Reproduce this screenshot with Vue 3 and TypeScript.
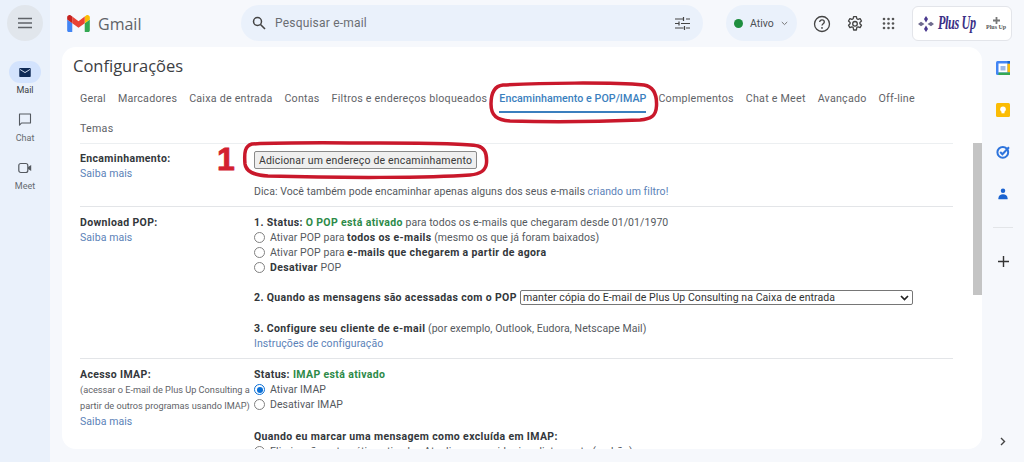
<script setup lang="ts">
const tabs: string[] = ['Geral', 'Marcadores', 'Caixa de entrada', 'Contas', 'Filtros e endereços bloqueados', 'Encaminhamento e POP/IMAP', 'Complementos', 'Chat e Meet', 'Avançado', 'Off-line', 'Temas']
</script>

<template>
  <div class="app">
    <aside class="rail">
      <button class="burger" aria-label="Menu">
        <svg width="16" height="12" viewBox="0 0 16 12"><path d="M1 1.500h14M1 6h14M1 10.500h14" stroke="#5f6368" stroke-width="1.400" fill="none" /></svg>
      </button>
      <div class="nav-item">
        <span class="pill active">
          <svg width="12" height="9" viewBox="0 0 14 11"><path d="M1.200 0h11.600C13.500 0 14 .5 14 1.200v8.600c0 .7-.5 1.200-1.200 1.200H1.200C.5 11 0 10.500 0 9.800V1.200C0 .5.500 0 1.200 0z" fill="#0f2a55" /><path d="M1 1.800l6 3.800 6-3.800" stroke="#e3ecf9" stroke-width="1.100" fill="none" /></svg>
        </span>
        <span class="nav-label dark">Mail</span>
      </div>
      <div class="nav-item">
        <span class="pill">
          <svg width="14" height="14" viewBox="0 0 14 14"><path d="M1.500 1h11v9h-9l-2 2.200z" stroke="#555a60" stroke-width="1.100" fill="none" stroke-linejoin="round" /></svg>
        </span>
        <span class="nav-label">Chat</span>
      </div>
      <div class="nav-item">
        <span class="pill">
          <svg width="14" height="12" viewBox="0 0 14 12"><rect x=".8" y="1.500" width="9" height="9" rx="2" stroke="#555a60" stroke-width="1.200" fill="none" /><path d="M10 5l3.200-2v6L10 7z" fill="#555a60" /></svg>
        </span>
        <span class="nav-label">Meet</span>
      </div>
    </aside>

    <div class="main">
      <header class="topbar">
        <div class="brand">
          <svg width="23" height="17" viewBox="0 0 24 18">
            <path d="M1.600 18h3.800V8.700L0 4.700v11.700C0 17.300.7 18 1.600 18z" fill="#4285f4" />
            <path d="M18.600 18h3.800c.9 0 1.600-.7 1.600-1.600V4.700l-5.400 4z" fill="#34a853" />
            <path d="M18.600 1.700v7L24 4.700V2.500C24 .500 21.700-.6 20.100.6z" fill="#fbbc04" />
            <path d="M5.400 8.700v-7L12 6.700l6.600-5v7L12 13.600z" fill="#ea4335" />
            <path d="M0 2.500v2.200l5.400 4v-7L3.900.6C2.300-.6 0 .5 0 2.500z" fill="#c5221f" />
          </svg>
          <span class="wordmark">Gmail</span>
        </div>
        <div class="search">
          <svg width="14" height="14" viewBox="0 0 14 14"><circle cx="5.500" cy="5.500" r="4" stroke="#444" stroke-width="1.500" fill="none" /><path d="M8.500 8.500l4.500 4.500" stroke="#444" stroke-width="1.600" /></svg>
          <span class="placeholder">Pesquisar e-mail</span>
          <svg class="tune" width="15" height="13" viewBox="0 0 15 13"><path d="M0 2h8.500M11 2h4M8.500 0v4M0 6.500h3.500M6 6.500h9M4 4.500v4M0 11h8.500M11 11h4M9.500 9v4" stroke="#444" stroke-width="1.200" fill="none" /></svg>
        </div>
        <div class="status"><i class="dot"></i><span>Ativo</span>
          <svg width="7" height="5" viewBox="0 0 7 5"><path d="M.8 1l2.700 2.600L6.200 1" stroke="#777" stroke-width="1" fill="none" /></svg>
        </div>
        <svg class="ico help" width="18" height="18" viewBox="0 0 18 18"><circle cx="9" cy="9" r="7.500" stroke="#444" stroke-width="1.300" fill="none" /><path d="M6.700 7.100c0-1.300 1-2.200 2.300-2.200s2.300.9 2.300 2.100c0 1.700-2.300 1.800-2.300 3.600" stroke="#444" stroke-width="1.300" fill="none" /><circle cx="9" cy="12.900" r=".9" fill="#444" /></svg>
        <svg class="ico gear" width="18" height="18" viewBox="0 0 18 18"><path d="M7.600 1h2.800l.4 2.100 1.300.7 2-.8 1.400 2.400-1.600 1.400v1.400l1.600 1.400-1.400 2.400-2-.8-1.300.7-.4 2.500H7.600l-.4-2.500-1.300-.7-2 .8-1.400-2.400 1.600-1.400V6.800L2.500 5.400 3.900 3l2 .8 1.300-.7z" transform="translate(0 .6)" stroke="#444" stroke-width="1.300" fill="none" stroke-linejoin="round" /><circle cx="9" cy="8.800" r="2.300" stroke="#444" stroke-width="1.300" fill="none" /></svg>
        <svg class="ico apps" width="13" height="13" viewBox="0 0 13 13"><g fill="#555"><circle cx="2" cy="2" r="1.300" /><circle cx="6.500" cy="2" r="1.300" /><circle cx="11" cy="2" r="1.300" /><circle cx="2" cy="6.500" r="1.300" /><circle cx="6.500" cy="6.500" r="1.300" /><circle cx="11" cy="6.500" r="1.300" /><circle cx="2" cy="11" r="1.300" /><circle cx="6.500" cy="11" r="1.300" /><circle cx="11" cy="11" r="1.300" /></g></svg>
        <div class="account">
          <svg class="flower" width="16" height="16" viewBox="0 0 16 16"><g fill="#4b3a8f"><path d="M8 0l2 3-2 3.500L6 3z" /><path d="M8 16l2-3-2-3.500L6 13z" /></g><path d="M0 8l3-2.200L6.500 8 3 10.200zM16 8l-3-2.200L9.500 8l3.500 2.200z" fill="#6f6b8e" /></svg>
          <span class="plus">Plus Up</span>
          <span class="mini"><svg width="7" height="7" viewBox="0 0 7 7"><path d="M3.500 0v7M0 3.500h7" stroke="#777" stroke-width="1.800" /></svg><b>Plus Up</b></span>
        </div>
      </header>

      <div class="body">
        <section class="card">
          <h1>Configurações</h1>
          <nav class="tabs">
            <a v-for="t in tabs" :key="t" class="tab" :class="{ on: t === 'Encaminhamento e POP/IMAP' }">{{ t }}</a>
          </nav>
          <div class="scroller">
            <div class="rows">
              <div class="row first">
                <div class="lab"><b>Encaminhamento:</b><a>Saiba mais</a></div>
                <div class="val">
                  <button class="add">Adicionar um endereço de encaminhamento</button>
                  <p class="tip">Dica: Você também pode encaminhar apenas alguns dos seus e-mails <a>criando um filtro!</a></p>
                </div>
              </div>
              <div class="row">
                <div class="lab"><b>Download POP:</b><a>Saiba mais</a></div>
                <div class="val">
                  <p><b>1. Status: <em>O POP está ativado</em></b> para todos os e-mails que chegaram desde 01/01/1970</p>
                  <label class="opt"><i class="radio"></i><span>Ativar POP para <b>todos os e-mails</b> (mesmo os que já foram baixados)</span></label>
                  <label class="opt"><i class="radio"></i><span>Ativar POP para <b>e-mails que chegarem a partir de agora</b></span></label>
                  <label class="opt"><i class="radio"></i><span><b>Desativar</b> POP</span></label>
                  <div class="when">
                    <b>2. Quando as mensagens são acessadas com o POP</b>
                    <div class="select"><span>manter cópia do E-mail de Plus Up Consulting na Caixa de entrada</span>
                      <svg width="9" height="6" viewBox="0 0 9 6"><path d="M1 1l3.500 3.500L8 1" stroke="#222" stroke-width="1.700" fill="none" /></svg>
                    </div>
                  </div>
                  <p class="third"><b>3. Configure seu cliente de e-mail</b> (por exemplo, Outlook, Eudora, Netscape Mail)</p>
                  <a>Instruções de configuração</a>
                </div>
              </div>
              <div class="row">
                <div class="lab">
                  <b>Acesso IMAP:</b>
                  <small>(acessar o E-mail de Plus Up Consulting a partir de outros programas usando IMAP)</small>
                  <a>Saiba mais</a>
                </div>
                <div class="val">
                  <p><b>Status: <em>IMAP está ativado</em></b></p>
                  <label class="opt"><i class="radio sel"></i><span>Ativar IMAP</span></label>
                  <label class="opt"><i class="radio"></i><span>Desativar IMAP</span></label>
                  <p class="when2"><b>Quando eu marcar uma mensagem como excluída em IMAP:</b></p>
                  <label class="opt"><i class="radio"></i><span>Eliminação automática ativada - Atualizar o servidor imediatamente (padrão)</span></label>
                </div>
              </div>
            </div>
            <div class="thumb"></div>
          </div>
        </section>

        <aside class="side">
          <svg width="14" height="14" viewBox="0 0 14 14"><rect width="14" height="14" rx="1.500" fill="#4285f4" /><rect x="2.500" y="2.500" width="9" height="9" fill="#fff" /><path d="M11.500 2.500H14V11.500H11.500z" fill="#fbbc04" /><path d="M2.500 11.500H14V14H2.500z" fill="#34a853" /><path d="M11.500 0H14V2.500H11.500z" fill="#1967d2" /><rect x="4.500" y="5" width="5" height="4.500" fill="#9db9e8" /></svg>
          <svg width="14" height="14" viewBox="0 0 14 14"><rect width="14" height="14" rx="1.500" fill="#fbbc04" /><circle cx="7" cy="6.300" r="2.800" fill="#fff" /><rect x="5.500" y="9" width="3" height="1.300" fill="#fff" /></svg>
          <svg width="14" height="14" viewBox="0 0 14 14"><circle cx="6.800" cy="7.300" r="5.400" stroke="#2e74dc" stroke-width="2" fill="none" /><path d="M4.200 7l2.200 2.200 6.600-7" stroke="#2e74dc" stroke-width="2" fill="none" /></svg>
          <svg width="10" height="14" viewBox="0 0 12 14"><circle cx="6" cy="3.200" r="2.700" fill="#1a63d0" /><path d="M.5 12c0-3 2.700-4.800 5.500-4.800s5.500 1.800 5.500 4.800v1.300H.5z" fill="#1a63d0" /></svg>
          <i class="rule"></i>
          <svg width="11" height="11" viewBox="0 0 11 11"><path d="M5.500 0v11M0 5.500h11" stroke="#333" stroke-width="1.400" /></svg>
          <svg class="chev" width="6" height="9" viewBox="0 0 6 9"><path d="M1 1l3.500 3.500L1 8" stroke="#444" stroke-width="1.400" fill="none" /></svg>
        </aside>
      </div>
    </div>

    <svg class="marks" width="1024" height="462" viewBox="0 0 1024 462">
      <path d="M503 85C540 83 610 82 644 85C655 87 657 96 656.500 106C656 116 651 119 640 120C590 122 545 122 510 121C497 120 491 116 491 104C491 93 494 86 503 85z" />
      <path d="M252 144C290 142 340 143 380 143C420 143 465 143 478 146C486 148 487 156 486.500 163C486 170 481 174 470 175C430 178 340 178 268 176C254 175 246 172 245 164C244 152 245 146 252 144z" />
    </svg>
    <span class="one">1</span>
  </div>
</template>

<style>
html, body { margin: 0; background: #f6f8fc; }
</style>

<style scoped>
.app { position: relative; display: flex; width: 1024px; height: 462px; overflow: hidden; background: #f6f8fc; font-family: Roboto, "Liberation Sans", sans-serif; color: #3c4043; }
.rail { width: 50px; flex: none; background: #eaf1fb; display: flex; flex-direction: column; align-items: center; }
.burger { width: 36px; height: 36px; flex: none; margin-top: 5px; margin-bottom: 20px; border: 0; border-radius: 50%; background: #e1e6ec; display: flex; align-items: center; justify-content: center; padding: 0; }
.nav-item { display: flex; flex-direction: column; align-items: center; margin-bottom: 12px; }
.pill { width: 32px; height: 22px; border-radius: 11px; display: flex; align-items: center; justify-content: center; }
.pill.active { background: #d3e3fd; }
.nav-label { font-size: 9px; line-height: 14px; color: #666b70; }
.nav-label.dark { color: #3c4043; }
.main { flex: 1; min-width: 0; display: flex; flex-direction: column; }
.topbar { height: 47px; flex: none; display: flex; align-items: center; }
.brand { width: 191px; padding-left: 17px; box-sizing: border-box; display: flex; align-items: center; gap: 8px; }
.wordmark { font-family: "Open Sans", Roboto, sans-serif; font-size: 16px; color: #5f6368; }
.search { width: 462px; height: 36px; box-sizing: border-box; border-radius: 18px; background: #eaf1fb; display: flex; align-items: center; padding: 0 13px 0 11px; margin-top: -1px; }
.placeholder { margin-left: 9px; font-size: 12px; color: #6a6e73; letter-spacing: .2px; flex: 1; }
.status { width: 71px; height: 36px; box-sizing: border-box; margin-left: 23px; margin-top: -1px; border-radius: 18px; background: #eaf1fb; display: flex; align-items: center; padding-left: 8px; font-size: 10.500px; color: #4c5054; }
.dot { width: 9px; height: 9px; border-radius: 50%; background: #1e8e3e; margin-right: 7px; }
.status svg { margin-left: 7px; }
.ico { flex: none; }
.help { margin-left: 16px; }
.gear { margin-left: 15px; }
.apps { margin-left: 18px; }
.account { width: 100px; height: 35px; box-sizing: border-box; margin-left: 17px; border: 1px solid #e3e5ea; border-radius: 6px; background: #fff; display: flex; align-items: center; padding-left: 5px; flex: none; overflow: hidden; }
.flower { flex: none; }
.plus { margin-left: 4px; width: 42px; flex: none; font-family: "Liberation Serif", serif; font-style: italic; font-weight: 700; font-size: 18px; letter-spacing: -.6px; color: #3b2f86; white-space: nowrap; transform: scaleX(.68); transform-origin: left center; }
.mini { margin-left: 6px; display: flex; flex-direction: column; align-items: center; line-height: 7px; }
.mini b { font-family: "Liberation Serif", serif; font-size: 6px; line-height: 7px; color: #555; white-space: nowrap; }
.body { flex: 1; min-height: 0; display: flex; padding-bottom: 13px; }
.card { width: 920px; margin-left: 12px; flex: none; background: #fff; border-radius: 14px; display: flex; flex-direction: column; overflow: hidden; }
h1 { margin: 9px 0 0 11px; font-size: 16.500px; line-height: 20px; font-weight: 400; color: #3c4043; font-family: "Open Sans", Roboto, sans-serif; letter-spacing: 0; }
.tabs { margin: 7px 0 0 18px; width: 860px; display: flex; flex-wrap: wrap; column-gap: 12px; height: 60px; align-content: flex-start; }
.tab { height: 30px; line-height: 32px; font-size: 10.700px; letter-spacing: .23px; color: #5f6368; box-sizing: border-box; white-space: nowrap; }
.tab.on { color: #3b7fbe; font-weight: 500; letter-spacing: .04px; border-bottom: 2px solid #3b7fbe; }
.scroller { flex: 1; min-height: 0; display: flex; overflow: hidden; }
.rows { width: 873px; margin-left: 18px; flex: none; font-size: 10.500px; line-height: 15px; letter-spacing: .07px; color: #55595e; border-top: 1px solid #eceff1; }
.row { display: flex; padding: 8px 0 7px; border-top: 1px solid #e3e5e8; }
.row:first-child { border-top: 0; padding-top: 7px; }
.lab { width: 174px; flex: none; display: flex; flex-direction: column; }
.lab b, .val b { color: #33373b; font-weight: 700; letter-spacing: .36px; }
.lab small { font-size: 9.200px; line-height: 16px; letter-spacing: 0; color: #5f6368; white-space: normal; }
a { color: #5b82b8; }
em { font-style: normal; color: #2d8a48; }
.val { flex: 1; min-width: 0; }
p { margin: 0; }
.add { display: block; width: 223px; height: 18px; padding: 0; border: 1px solid #8a8a8a; border-radius: 2px; background: #efefef; color: #3a3a3a; font: inherit; letter-spacing: .18px; text-align: center; margin-bottom: 15px; }
.opt { display: flex; align-items: center; white-space: nowrap; }
.radio { width: 9px; height: 9px; border: 1px solid #808080; border-radius: 50%; margin-right: 5px; flex: none; background: #fff; position: relative; }
.radio.sel { border-color: #0a6fd6; }
.radio.sel::after { content: ""; position: absolute; inset: 1.500px; border-radius: 50%; background: #0a6fd6; }
.when { display: flex; align-items: center; margin-top: 15px; height: 15px; white-space: nowrap; }
.select { width: 393px; height: 15px; margin-left: auto; margin-right: 40px; flex: none; box-sizing: border-box; border: 1px solid #767676; border-radius: 2px; background: #fff; display: flex; align-items: center; justify-content: space-between; padding: 0 3px 0 2px; font-size: 10.500px; color: #333; }
.third { margin-top: 16px; }
.when2 { margin-top: 17px; }
.thumb { width: 9px; height: 152px; margin-left: 20px; background: #c4c4c4; flex: none; }
.side { flex: 1; display: flex; flex-direction: column; align-items: center; padding-top: 14px; position: relative; }
.side > svg { margin-bottom: 28px; flex: none; }
.side > .rule { width: 20px; height: 1px; background: #e3e5e8; margin: -2px 0 28px; }
.side > svg:nth-of-type(5) { margin-bottom: 0; }
.side > .chev { position: absolute; bottom: 3px; margin: 0; }
.marks { position: absolute; left: 0; top: 0; pointer-events: none; }
.marks path { fill: none; stroke: #c9182b; stroke-width: 3.500; }
.one { position: absolute; left: 217px; top: 140px; font-family: "Liberation Sans", sans-serif; font-weight: 700; font-size: 32px; line-height: 38px; color: #d32030; -webkit-text-stroke: .8px #d32030; }
</style>
